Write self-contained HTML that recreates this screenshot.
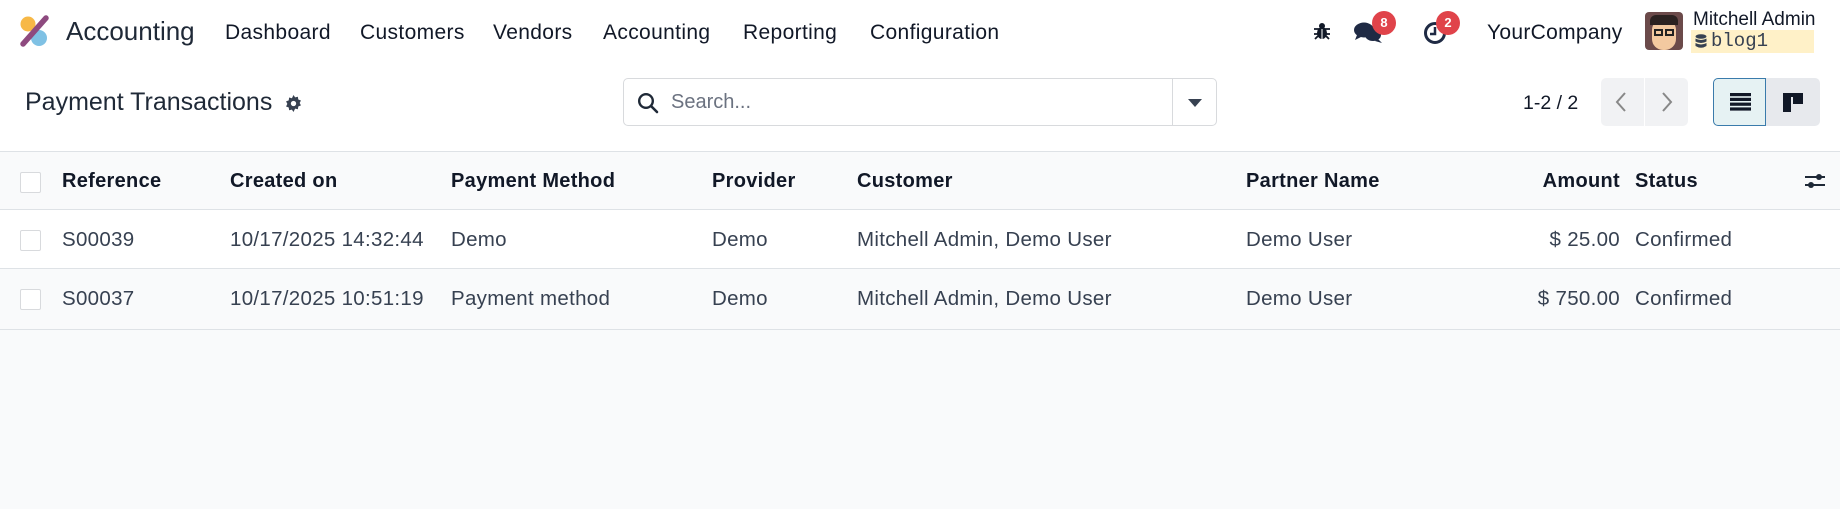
<!DOCTYPE html>
<html><head><meta charset="utf-8"><style>
*{margin:0;padding:0;box-sizing:border-box}
body{width:1840px;height:509px;overflow:hidden;background:#f9fafb;font-family:"Liberation Sans",sans-serif;color:#374151;position:relative}
.a{position:absolute;white-space:nowrap}
.nav{position:absolute;left:0;top:0;width:1840px;height:151px;background:#fff}
.nv{font-size:21px;letter-spacing:0.35px;color:#111827;top:21px}
.hdr{position:absolute;left:0;top:151px;width:1840px;height:59px;background:#f9fafb;border-top:1px solid #dee2e6;border-bottom:1px solid #dee2e6}
.r1{position:absolute;left:0;top:210px;width:1840px;height:59px;background:#fff;border-bottom:1px solid #dee2e6}
.r2{position:absolute;left:0;top:269px;width:1840px;height:61px;background:#f9fafb;border-bottom:1px solid #dee2e6}
.th{font-weight:bold;font-size:20px;letter-spacing:0.3px;color:#111827;top:18px}
.td{font-size:20.5px;letter-spacing:0.3px;color:#374151;top:18px}
.cb{position:absolute;left:20px;top:20px;width:21px;height:21px;border:1px solid #d8dadd;background:#fff;border-radius:2px}
.badge{position:absolute;width:24px;height:24px;border-radius:12px;background:#e0434a;color:#fff;font-size:13px;font-weight:bold;text-align:center;line-height:24px}
</style></head><body>
<div class="nav">
<svg class="a" style="left:18px;top:14px" width="34" height="34" viewBox="0 0 34 34"><circle cx="10" cy="10" r="7.5" fill="#f7b846"/><circle cx="21" cy="24" r="8" fill="#7fc1e4"/><line x1="5" y1="30" x2="28" y2="4" stroke="#8e4a7f" stroke-width="5.5" stroke-linecap="round"/></svg>
<div class="a" style="left:66px;top:16px;font-size:26px;color:#1f2937">Accounting</div>
<div class="a nv" style="left:225px">Dashboard</div>
<div class="a nv" style="left:360px">Customers</div>
<div class="a nv" style="left:493px">Vendors</div>
<div class="a nv" style="left:603px">Accounting</div>
<div class="a nv" style="left:743px">Reporting</div>
<div class="a nv" style="left:870px">Configuration</div>
<svg class="a" style="left:1313px;top:22px" width="18" height="18" viewBox="0 0 18 18" fill="#111827"><ellipse cx="9" cy="11" rx="5" ry="6"/><circle cx="9" cy="4" r="3"/><path d="M1 7h16M1 12h16M2 17l3-3M16 17l-3-3" stroke="#111827" stroke-width="1.8"/><line x1="9" y1="7" x2="9" y2="17" stroke="#fff" stroke-width="1"/></svg>
<svg class="a" style="left:1354px;top:21px" width="30" height="24" viewBox="0 0 30 24" fill="#1f2a44"><ellipse cx="10" cy="9" rx="10" ry="7.5"/><path d="M3 14l-2 5 6-3z"/><ellipse cx="19" cy="14" rx="8" ry="6"/><path d="M24 18l4 4-7-2z"/></svg>
<div class="badge" style="left:1372px;top:11px">8</div>
<svg class="a" style="left:1423px;top:21px" width="24" height="24" viewBox="0 0 24 24"><circle cx="12" cy="12" r="9.5" fill="none" stroke="#1f2a44" stroke-width="3"/><path d="M12 6v7H7" fill="none" stroke="#1f2a44" stroke-width="2.5"/></svg>
<div class="badge" style="left:1436px;top:11px">2</div>
<div class="a" style="left:1487px;top:21px;font-size:21px;letter-spacing:0.3px;color:#111827">YourCompany</div>
<div class="a" style="left:1645px;top:12px;width:38px;height:38px;border-radius:4px;background:#6b4a4a;overflow:hidden"><div style="position:absolute;left:7px;top:7px;width:24px;height:31px;border-radius:11px;background:#f3c9a0"></div><div style="position:absolute;left:5px;top:3px;width:28px;height:10px;border-radius:6px 6px 0 0;background:#2b2221"></div><div style="position:absolute;left:9px;top:17px;width:9px;height:7px;border:2px solid #222"></div><div style="position:absolute;left:20px;top:17px;width:9px;height:7px;border:2px solid #222"></div></div>
<div class="a" style="left:1693px;top:9px;font-size:19px;color:#111827">Mitchell Admin</div>
<div class="a" style="left:1691px;top:30px;width:123px;height:23px;background:#fff1c8"></div>
<svg class="a" style="left:1695px;top:34px" width="12" height="15" viewBox="0 0 12 15" fill="#374151"><ellipse cx="6" cy="2.5" rx="5.5" ry="2.3"/><path d="M.5 4.5q5.5 3 11 0v3q-5.5 3-11 0zM.5 9q5.5 3 11 0v3q-5.5 3.5-11 0z"/></svg>
<div class="a" style="left:1711px;top:30px;font-size:19px;font-family:'Liberation Mono',monospace;color:#374151">blog1</div>

<div class="a" style="left:25px;top:88px;font-size:25px;color:#1f2937">Payment Transactions</div>
<svg class="a" style="left:285px;top:95px" width="17" height="17" viewBox="0 0 16 16"><path fill="#374151" d="M8 0l1.5 2.2 2.6-.6.4 2.6 2.5 1-1.2 2.3 1.2 2.3-2.5 1-.4 2.6-2.6-.6L8 16l-1.5-2.2-2.6.6-.4-2.6-2.5-1L2.2 8.3 1 6l2.5-1 .4-2.6 2.6.6z"/><circle cx="8" cy="8" r="2.5" fill="#fff"/></svg>
<div class="a" style="left:623px;top:78px;width:594px;height:48px;border:1px solid #d8dadd;border-radius:5px;background:#fff"></div>
<div class="a" style="left:1172px;top:79px;width:1px;height:46px;background:#d8dadd"></div>
<svg class="a" style="left:637px;top:92px" width="22" height="22" viewBox="0 0 22 22"><circle cx="9" cy="9" r="6.8" fill="none" stroke="#1f2937" stroke-width="2.4"/><line x1="14" y1="14" x2="20" y2="20" stroke="#1f2937" stroke-width="2.6" stroke-linecap="round"/></svg>
<div class="a" style="left:671px;top:91px;font-size:20px;color:#6b7280">Search...</div>
<svg class="a" style="left:1188px;top:99px" width="14" height="8" viewBox="0 0 14 8"><path d="M0 0h14L7 8z" fill="#374151"/></svg>
<div class="a" style="left:1523px;top:92px;font-size:19.5px;color:#111827">1-2 / 2</div>
<div class="a" style="left:1601px;top:78px;width:43px;height:48px;background:#f1f2f4;border-radius:5px 0 0 5px"></div>
<div class="a" style="left:1645px;top:78px;width:43px;height:48px;background:#f1f2f4;border-radius:0 5px 5px 0"></div>
<svg class="a" style="left:1613px;top:91px" width="16" height="22" viewBox="0 0 16 22"><path d="M12 2L4 11l8 9" fill="none" stroke="#888" stroke-width="2"/></svg>
<svg class="a" style="left:1659px;top:91px" width="16" height="22" viewBox="0 0 16 22"><path d="M4 2l8 9-8 9" fill="none" stroke="#888" stroke-width="2"/></svg>
<div class="a" style="left:1713px;top:78px;width:53px;height:48px;background:#e6f2f3;border:1px solid #3a7bab;border-radius:5px 0 0 5px"></div>
<div class="a" style="left:1766px;top:78px;width:54px;height:48px;background:#e7e9ed;border-radius:0 5px 5px 0"></div>
<svg class="a" style="left:1730px;top:93px" width="21" height="18" viewBox="0 0 21 18" fill="#111827"><rect y="0" width="21" height="3.2"/><rect y="4.8" width="21" height="3.2"/><rect y="9.6" width="21" height="3.2"/><rect y="14.4" width="21" height="3.2"/></svg>
<svg class="a" style="left:1783px;top:93px" width="20" height="19" viewBox="0 0 20 19" fill="#111827"><rect width="20" height="4"/><rect width="8" height="19"/><rect x="10" width="10" height="11"/></svg>
</div>

<div class="hdr"><div class="cb"></div>
<div class="a th" style="left:62px">Reference</div>
<div class="a th" style="left:230px">Created on</div>
<div class="a th" style="left:451px">Payment Method</div>
<div class="a th" style="left:712px">Provider</div>
<div class="a th" style="left:857px">Customer</div>
<div class="a th" style="left:1246px">Partner Name</div>
<div class="a th" style="right:220px">Amount</div>
<div class="a th" style="left:1635px">Status</div>
<svg class="a" style="left:1805px;top:19px" width="20" height="20" viewBox="0 0 20 20" fill="#1f2937"><rect x="0" y="5" width="20" height="2"/><circle cx="14" cy="6" r="3"/><rect x="0" y="13" width="20" height="2"/><circle cx="6" cy="14" r="3"/></svg>
</div>
<div class="r1"><div class="cb"></div>
<div class="a td" style="left:62px">S00039</div>
<div class="a td" style="left:230px">10/17/2025 14:32:44</div>
<div class="a td" style="left:451px">Demo</div>
<div class="a td" style="left:712px">Demo</div>
<div class="a td" style="left:857px">Mitchell Admin, Demo User</div>
<div class="a td" style="left:1246px">Demo User</div>
<div class="a td" style="right:220px">$ 25.00</div>
<div class="a td" style="left:1635px">Confirmed</div>
</div>
<div class="r2"><div class="cb"></div>
<div class="a td" style="left:62px">S00037</div>
<div class="a td" style="left:230px">10/17/2025 10:51:19</div>
<div class="a td" style="left:451px">Payment method</div>
<div class="a td" style="left:712px">Demo</div>
<div class="a td" style="left:857px">Mitchell Admin, Demo User</div>
<div class="a td" style="left:1246px">Demo User</div>
<div class="a td" style="right:220px">$ 750.00</div>
<div class="a td" style="left:1635px">Confirmed</div>
</div>
</body></html>
